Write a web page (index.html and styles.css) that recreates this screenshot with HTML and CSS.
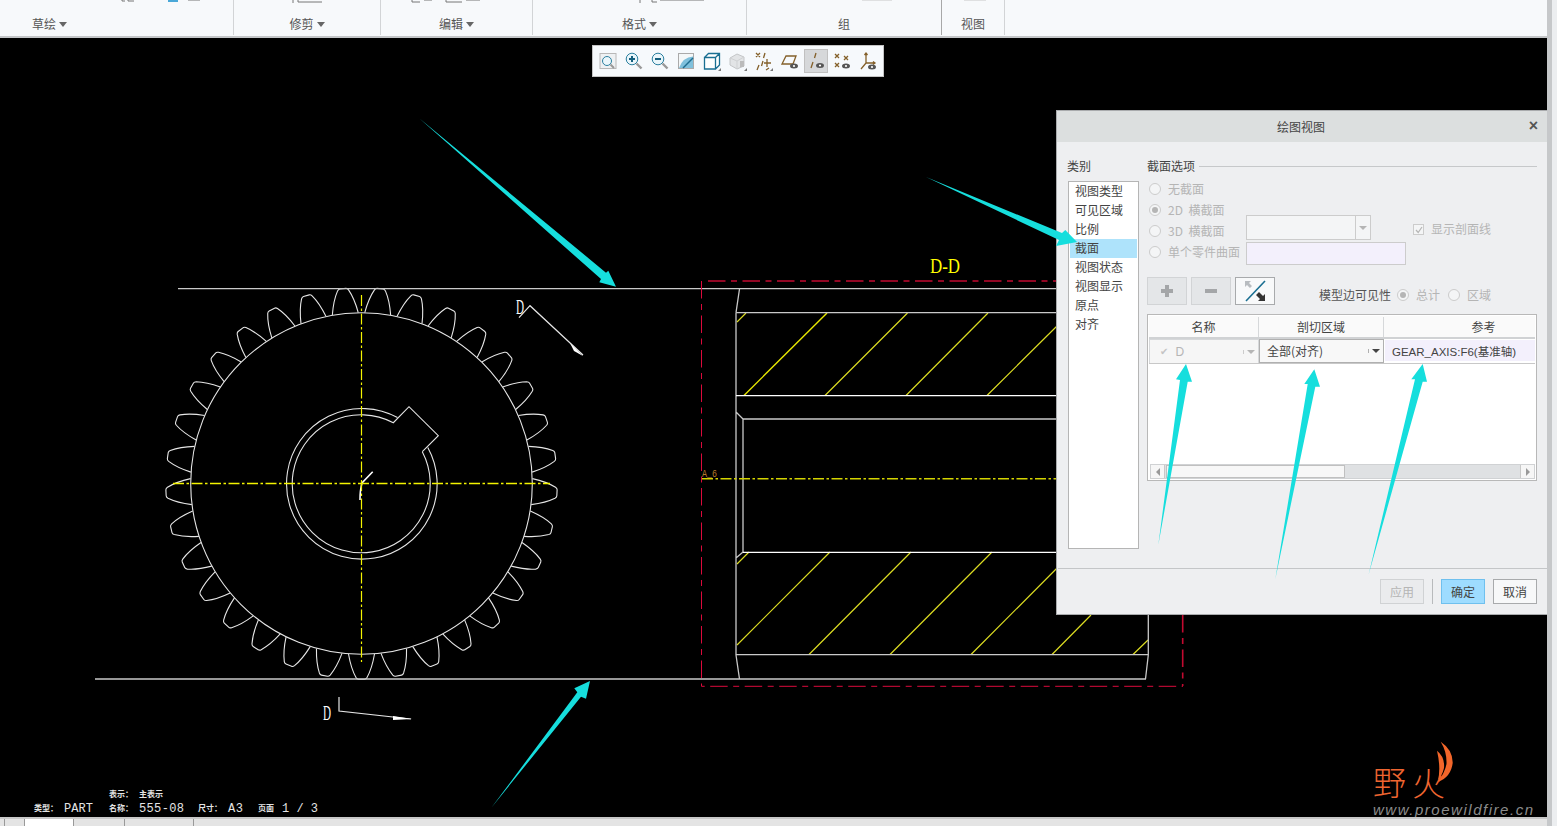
FILE: index.html
```html
<!DOCTYPE html>
<html lang="zh">
<head>
<meta charset="utf-8">
<title>绘图视图</title>
<link rel="stylesheet" href="styles.css">
</head>
<body>
<div class="app">
  <div class="main">
    <header class="ribbon">
      <div class="group g1"><span class="glab">草绘</span><i class="caret"></i></div>
      <div class="group g2"><span class="glab">修剪</span><i class="caret"></i></div>
      <div class="group g3"><span class="glab">编辑</span><i class="caret"></i></div>
      <div class="group g4"><span class="glab">格式</span><i class="caret"></i></div>
      <div class="group g5"><span class="glab">组</span></div>
      <div class="group g6"><span class="glab">视图</span></div>
      <svg class="clipped" width="1010" height="5" viewBox="0 0 1010 5">
        <path d="M122 0v1h3M128 0v1h6M188 0h12M293 0v3M298 0v2h24M412 0v2h8M424 0h8M446 0v2h16M466 0h14M640 0v3M652 0v2h5M660 0h44" stroke="#777" fill="none"/>
        <rect x="168" y="0" width="10" height="2" fill="#4aa8d8"/>
        <path d="M862 0h30M964 0h22" stroke="#c8c8c8" fill="none"/>
      </svg>
    </header>
    <div class="canvas">
      <svg class="drawing" width="1547" height="779" viewBox="0 38 1547 779">
        <defs>
          <path id="tooth" d="M-13 170.5Q-10.5 185-5.5 194Q-4.5 195.7-3 195.7L3 195.7Q4.5 195.7 5.5 194Q10.5 185 13 170.5"/>
        </defs>
        <!-- gear -->
        <g class="gear">
          <circle cx="361.5" cy="483.5" r="170.8"/>
          <g transform="translate(361.5 483.5)">
            <use href="#tooth"/><use href="#tooth" transform="rotate(10.909)"/><use href="#tooth" transform="rotate(21.818)"/>
            <use href="#tooth" transform="rotate(32.727)"/><use href="#tooth" transform="rotate(43.636)"/><use href="#tooth" transform="rotate(54.545)"/>
            <use href="#tooth" transform="rotate(65.455)"/><use href="#tooth" transform="rotate(76.364)"/><use href="#tooth" transform="rotate(87.273)"/>
            <use href="#tooth" transform="rotate(98.182)"/><use href="#tooth" transform="rotate(109.091)"/><use href="#tooth" transform="rotate(120)"/>
            <use href="#tooth" transform="rotate(130.909)"/><use href="#tooth" transform="rotate(141.818)"/><use href="#tooth" transform="rotate(152.727)"/>
            <use href="#tooth" transform="rotate(163.636)"/><use href="#tooth" transform="rotate(174.545)"/><use href="#tooth" transform="rotate(185.455)"/>
            <use href="#tooth" transform="rotate(196.364)"/><use href="#tooth" transform="rotate(207.273)"/><use href="#tooth" transform="rotate(218.182)"/>
            <use href="#tooth" transform="rotate(229.091)"/><use href="#tooth" transform="rotate(240)"/><use href="#tooth" transform="rotate(250.909)"/>
            <use href="#tooth" transform="rotate(261.818)"/><use href="#tooth" transform="rotate(272.727)"/><use href="#tooth" transform="rotate(283.636)"/>
            <use href="#tooth" transform="rotate(294.545)"/><use href="#tooth" transform="rotate(305.455)"/><use href="#tooth" transform="rotate(316.364)"/>
            <use href="#tooth" transform="rotate(327.273)"/><use href="#tooth" transform="rotate(338.182)"/><use href="#tooth" transform="rotate(349.091)"/>
          </g>
          <path d="M397.5 417.5A75.3 75.3 0 1 0 427.8 447.5"/>
          <path d="M422.3 451.7A69 69 0 1 1 393.3 422.7L409 406.7L438.3 435.7L422.3 451.7"/>
          <path class="cursor" d="M372.7 471.7L362 483Q360 490 360 500"/>
        </g>
        <path class="axis wide" d="M173 483.5H550"/>
        <path class="axis" d="M361.5 295V662"/>
        <!-- baselines -->
        <path class="line" d="M178 288.7H1057M95 679H1146"/>
        <!-- section view -->
        <path class="hatch" d="M827 313L744 395.5"/>
        <path class="hatch thin" d="M746 313L737 322M907.5 313L825 395.5M988 313L906 395.5M1057 326L987 395.5M749 552L737 564M830 552L737 645M911 552L809 654.5M992 552L890 654.5M1073 552L971 654.5M1091 615L1052 654.5M1148 640L1133 654.5"/>
        <path class="line" d="M736 312.7H1057M736 312.7V655M743 419H1057M743 419V552M736 412L743 419M736 558L743 552M736 654.7H1148M1148.3 610V655M739.5 289L736 312.7M736 655L739.5 679M1148.3 655L1145.5 679"/>
        <path class="bright" d="M736 395.7H1057M743 552.3H1057"/>
        <path class="redTop" d="M708 281H1057"/>
        <path class="redThin" d="M701.5 281V686.3H1183"/>
        <path class="redTop" d="M1182.7 615V686"/>
        <path class="axis2" d="M702 478.7H1057"/>
        <text class="dd" x="930" y="273" textLength="30" lengthAdjust="spacingAndGlyphs">D-D</text>
        <text class="a6" x="702" y="477" textLength="15" lengthAdjust="spacingAndGlyphs">A_6</text>
        <!-- section marks -->
        <text class="mark" x="516" y="314" textLength="8" lengthAdjust="spacingAndGlyphs">D</text>
        <path class="mark-l" d="M519 317.7L530 305.7L583 355"/>
        <path class="mark-a" d="M570 343L583 356L574 351Z"/>
        <text class="mark" x="323" y="720" textLength="8" lengthAdjust="spacingAndGlyphs">D</text>
        <path class="mark-l" d="M339 697V711L411 719"/>
        <path class="mark-a" d="M393 716L412 719L393 720Z"/>
        <!-- title block -->
        <text class="tb tbs" x="109" y="797">表示：</text><text class="tb tbs" x="139" y="797">主表示</text>
        <text class="tb tbs" x="34" y="811">类型：</text><text class="tb" x="64" y="812" textLength="29" lengthAdjust="spacing">PART</text>
        <text class="tb tbs" x="109" y="811">名称：</text><text class="tb" x="139" y="812" textLength="45" lengthAdjust="spacing">555-08</text>
        <text class="tb tbs" x="198" y="811">尺寸：</text><text class="tb" x="228" y="812" textLength="15" lengthAdjust="spacing">A3</text>
        <text class="tb tbs" x="258" y="811">页面</text><text class="tb" x="282" y="812" textLength="36" lengthAdjust="spacing">1 / 3</text>
        <!-- logo -->
        <text class="logo" x="1373" y="795">野</text>
        <text class="logo" x="1412" y="796">火</text>
        <path class="flame" d="M1440.7 741.7Q1453 750 1452.7 763Q1451 777 1438 782Q1445 772 1446.5 764Q1447 752 1440.7 741.7Z"/>
        <path class="flame" d="M1437 750.7Q1445 757 1444 768Q1442 776 1438 780Q1441 768 1437 750.7Z"/>
        <text class="www" x="1373" y="815" textLength="160" lengthAdjust="spacing">www.proewildfire.cn</text>
      </svg>

      <nav class="viewbar">
        <span class="vb"><svg width="20" height="20" viewBox="0 0 20 20"><rect x="2" y="2.5" width="16" height="15" fill="#eef1f3" stroke="#b8b8b8"/><circle cx="9" cy="10" r="4.5" fill="#eaf6fb" stroke="#2a7f9f"/><path d="M12.5 13.5L16 17" stroke="#999" stroke-width="2"/></svg></span>
        <span class="vb"><svg width="20" height="20" viewBox="0 0 20 20"><circle cx="8" cy="8" r="5.8" fill="#eaf6fb" stroke="#2a7f9f"/><path d="M8 5V11M5 8H11" stroke="#15607f" stroke-width="2"/><path d="M12.5 12.5L17.5 17.5" stroke="#999" stroke-width="2.4"/></svg></span>
        <span class="vb"><svg width="20" height="20" viewBox="0 0 20 20"><circle cx="8" cy="8" r="5.8" fill="#eaf6fb" stroke="#2a7f9f"/><path d="M5 8H11" stroke="#15607f" stroke-width="2"/><path d="M12.5 12.5L17.5 17.5" stroke="#999" stroke-width="2.4"/></svg></span>
        <span class="vb"><svg width="20" height="20" viewBox="0 0 20 20"><rect x="2.5" y="2.5" width="15" height="15" fill="#7fc0dc" stroke="#aaa"/><path d="M3 3H17V5.5Q7 6 3 17Z" fill="#f4f7f8"/><path d="M7 17L17 7" stroke="#1f6d8f" stroke-width="1.4"/></svg></span>
        <span class="vb"><svg width="20" height="20" viewBox="0 0 20 20"><path d="M2.5 6.5H13.5V18H2.5ZM2.5 6.5L6.5 2.5H17.5V14L13.5 18M13.5 6.5L17.5 2.5" fill="#fff" stroke="#1a6f92" stroke-width="1.3"/><path d="M19 17V20H16Z" fill="#777"/></svg></span>
        <span class="vb"><svg width="20" height="20" viewBox="0 0 20 20"><path d="M2 7L9 3L16 6V15L9 18L2 14Z" fill="#e2e4e6" stroke="#c4c6c8"/><path d="M2 7L9 10L16 6M9 10V18" stroke="#cfd1d3" fill="none"/><rect x="12" y="10" width="4" height="6" fill="#bbb"/><path d="M19 17V20H16Z" fill="#777"/></svg></span>
        <span class="vb"><svg width="20" height="20" viewBox="0 0 20 20"><path class="dt" d="M2 2L6 6M6 2L2 6M11 2L9.5 7M9 10L7.5 15M5 14L3 19M13 8V16M10 12H17M15 17L12 19"/><path d="M19 17V20H16Z" fill="#777"/></svg></span>
        <span class="vb"><svg width="20" height="20" viewBox="0 0 20 20"><path class="dt" d="M6 5H16L13 13H2Z"/><ellipse cx="14" cy="15" rx="4" ry="2.5" fill="#555"/><circle cx="14" cy="15" r="1.1" fill="#fff"/></svg></span>
        <span class="vb on"><svg width="20" height="20" viewBox="0 0 20 20"><path class="dt" d="M10 2L8.5 7M7 11L5 17"/><ellipse cx="14" cy="14.5" rx="4" ry="2.5" fill="#555"/><circle cx="14" cy="14.5" r="1.1" fill="#fff"/></svg></span>
        <span class="vb"><svg width="20" height="20" viewBox="0 0 20 20"><path class="dt" d="M3 3L7 7M7 3L3 7M12 5L16 9M16 5L12 9M3 12L7 16M7 12L3 16"/><ellipse cx="14" cy="15" rx="4" ry="2.5" fill="#555"/><circle cx="14" cy="15" r="1.1" fill="#fff"/></svg></span>
        <span class="vb"><svg width="20" height="20" viewBox="0 0 20 20"><path class="dt" d="M8 2V12H17M8 12L3 18M6.5 4L8 2L9.5 4M15 10.5L17 12L15 13.5"/><ellipse cx="14" cy="16" rx="4" ry="2.5" fill="#555"/><circle cx="14" cy="16" r="1.1" fill="#fff"/></svg></span>
      </nav>

      <section class="dialog">
        <div class="dtitle"><span>绘图视图</span><b class="close">×</b></div>
        <div class="dbody">
          <aside class="cat">
            <div class="catlab">类别</div>
            <ul class="catlist">
              <li>视图类型</li><li>可见区域</li><li>比例</li><li class="sel">截面</li>
              <li>视图状态</li><li>视图显示</li><li>原点</li><li>对齐</li>
            </ul>
          </aside>
          <div class="opts">
            <div class="legend"><span>截面选项</span><i></i></div>
            <div class="secgrid">
              <div class="radios">
                <label class="rad"><i class="rb"></i>无截面</label>
                <label class="rad"><i class="rb chk"></i>2D 横截面</label>
                <label class="rad"><i class="rb"></i>3D 横截面</label>
                <label class="rad"><i class="rb"></i>单个零件曲面</label>
              </div>
              <div class="fields">
                <div class="combo"><span class="cbody"></span><span class="cdrop"><i class="tri"></i></span></div>
                <div class="tint"></div>
              </div>
              <label class="hatchchk"><i class="cb"><svg width="10" height="10" viewBox="0 0 10 10"><path d="M2 5L4.2 7.5L8 2" fill="none" stroke="#b5b5b5" stroke-width="1.2"/></svg></i>显示剖面线</label>
            </div>
            <div class="tools">
              <button class="tbtn dis"><svg width="16" height="16" viewBox="0 0 16 16"><path d="M8 2V14M2 8H14" stroke="#a4a6a8" stroke-width="4"/></svg></button>
              <button class="tbtn dis"><svg width="16" height="16" viewBox="0 0 16 16"><path d="M2 8H14" stroke="#a4a6a8" stroke-width="4"/></svg></button>
              <button class="tbtn act"><svg width="24" height="24" viewBox="0 0 24 24"><path d="M3 22L22 2" stroke="#1a6f92" stroke-width="1.6"/><path d="M2 2H8L6 4L9 7L7 9L4 6L2 8Z" fill="#b8bcc0"/><path d="M22 22H15L17 20L13 16L16 13L20 17L22 15Z" fill="#333"/></svg></button>
              <div class="vis">
                <span class="vislab">模型边可见性</span>
                <label class="rad2"><i class="rb chk"></i>总计</label>
                <label class="rad2"><i class="rb"></i>区域</label>
              </div>
            </div>
            <div class="table">
              <div class="thead"><div class="th c1">名称</div><div class="th c2">剖切区域</div><div class="th c3 far">参考</div></div>
              <div class="trow">
                <div class="td c1 off"><span class="tick">✔</span><span class="tname">D</span><span class="cdrop"><i class="tri"></i></span></div>
                <div class="td c2 on2"><span class="tname2">全部(对齐)</span><span class="cdrop dark"><i class="tri"></i></span></div>
                <div class="td c3 ref">GEAR_AXIS:F6(基准轴)</div>
              </div>
              <div class="tempty"></div>
              <div class="hscroll">
                <span class="sbtn"><i class="tl"></i></span>
                <span class="thumb"></span>
                <span class="track"></span>
                <span class="sbtn"><i class="tr"></i></span>
              </div>
            </div>
          </div>
        </div>
        <footer class="dfoot">
          <button class="fbtn ghost">应用</button>
          <i class="fdiv"></i>
          <button class="fbtn primary">确定</button>
          <button class="fbtn">取消</button>
        </footer>
      </section>
    </div>
    <div class="status">
      <span class="st s1"></span><span class="st s2"></span><span class="st s3"></span><span class="st s4"></span><span class="st s5"></span><span class="st s6"></span>
    </div>
  </div>
  <div class="edge"></div>
</div>

<svg class="overlay" width="1557" height="826" viewBox="0 0 1557 826">
  <polygon class="arw" points="419.5,118.5 606,272.7 608.3,270.7 616,286.7 599.3,282.3 601,279"/>
  <polygon class="arw" points="926,177 1062,233 1065.3,230 1077,242 1056,246 1059,240"/>
  <polygon class="arw" points="1158.3,545 1180,380 1176,379.3 1186,364 1192,381.7 1187.7,381.7"/>
  <polygon class="arw" points="1275.3,579.3 1307.7,384 1304.3,384 1314.3,369.3 1320,386.7 1315.3,386.7"/>
  <polygon class="arw" points="1368.7,574.3 1415,379.3 1411.3,379.3 1422.7,364 1427,381.7 1422.7,381.7"/>
  <polygon class="arw" points="491.7,807.3 577.3,692.3 574.3,688.3 590,681 586,698.7 581,696.7"/>
</svg>
</body>
</html>
```
FILE: styles.css
```css
* { box-sizing: border-box; }
html, body { margin: 0; padding: 0; height: 100%; overflow: hidden; background: #000; }
body { font: 12px/1 "Noto Sans CJK SC", "Liberation Sans", sans-serif; color: #444; }
i { display: block; font-style: normal; }

.app { display: flex; width: 1557px; height: 826px; position: relative; }
.main { width: 1547px; display: flex; flex-direction: column; }
.edge { width: 10px; background: linear-gradient(90deg, #c6c8ca 0 5px, #eceef0 5px); }

/* ribbon */
.ribbon { height: 38px; flex: none; display: flex; background: #f7f9fb; border-bottom: 2px solid #c4c6c8; position: relative; }
.group { display: flex; align-items: center; justify-content: center; gap: 3px; padding-top: 13px; height: 35px; border-right: 1px solid #d2d4d6; color: #555; }
.g1 { width: 234px; padding-right: 134px; }
.g2 { width: 147px; }
.g3 { width: 152px; }
.g4 { width: 214px; }
.g5 { width: 195px; border-right-color: #a8a8a8; }
.g6 { width: 63px; }
.glab { font-size: 12px; }
.caret { width: 0; height: 0; border: 4px solid transparent; border-top: 5px solid #666; border-bottom: 0; }
.clipped { position: absolute; left: 0; top: 0; }

/* canvas */
.canvas { flex: 1; position: relative; background: #000; overflow: hidden; }
.drawing { display: block; }
.gear, .gear use { fill: none; stroke: #e6e6e6; stroke-width: 1.1; }
.cursor { stroke: #fff; stroke-width: 1.6; }
.axis { fill: none; stroke: #f4f400; stroke-width: 1.2; stroke-dasharray: 11 2.5 2.5 2.5; }
.axis.wide { stroke-width: 1.7; }
.axis2 { fill: none; stroke: #d4d400; stroke-width: 1.4; stroke-dasharray: 11 2.5 2.5 2.5; }
.line { fill: none; stroke: #c9c9c9; stroke-width: 1.3; }
.bright { fill: none; stroke: #fff; stroke-width: 1.3; }
.hatch { fill: none; stroke: #e8e800; stroke-width: 1.4; }
.hatch.thin { stroke: #dcdc22; stroke-width: 1.2; }
.redTop { fill: none; stroke: #c20a30; stroke-width: 1.6; stroke-dasharray: 17.5 5.5 6 5.5; }
.redThin { fill: none; stroke: #dc0a3c; stroke-width: 1; stroke-dasharray: 17.5 5.5 6 5.5; }
.dd { fill: #ffff00; font: 21px "Liberation Serif", serif; }
.a6 { fill: #b87a2a; font: 10px "Liberation Mono", monospace; }
.mark { fill: #fff; font: 20px "Liberation Serif", serif; }
.mark-l { fill: none; stroke: #e6e6e6; stroke-width: 1.2; }
.mark-a { fill: #fff; }
.tb { fill: #e4e4e4; font: 12px "Liberation Mono", monospace; }
.tbs { font: 700 8px "Noto Sans CJK SC", sans-serif; }
.logo { fill: #ee6530; font: 300 33px "Noto Sans CJK SC", sans-serif; }
.flame { fill: #f2662a; }
.www { fill: #8c8c8c; font: italic 15px "Liberation Sans", sans-serif; }

/* view toolbar */
.viewbar { position: absolute; left: 592px; top: 7px; width: 292px; height: 32px; display: flex; align-items: center; gap: 2px; padding-left: 3px; background: #f6f9fc; border: 1px solid #c4c4c4; }
.vb { width: 24px; height: 24px; flex: none; display: flex; align-items: center; justify-content: center; }
.vb.on { background: #d6d8da; border: 1px solid #c0c0c0; }
.dt { fill: none; stroke: #84602a; stroke-width: 1.3; }

/* dialog */
.dialog { position: absolute; left: 1056px; top: 72px; width: 491px; height: 505px; background: #eeeff1; border: 1px solid #a9abad; border-right: 0; display: flex; flex-direction: column; color: #444; }
.dtitle { height: 31px; flex: none; background: #dcdfdf; display: flex; align-items: center; justify-content: center; position: relative; padding-right: 2px; color: #444; }
.close { position: absolute; right: 9px; top: 7px; font: 700 16px/16px "Liberation Sans", sans-serif; color: #555; }
.dbody { flex: 1; display: flex; padding: 18px 10px 0 11px; gap: 8px; }
.cat { width: 71px; flex: none; }
.catlab { height: 21px; line-height: 12px; margin-left: -1px; }
.catlist { list-style: none; margin: 0; padding: 0 1px; height: 368px; width: 71px; background: #fff; border: 1px solid #b5b5b5; }
.catlist li { height: 19px; line-height: 18px; padding-left: 5px; white-space: nowrap; }
.catlist .sel { background: #aee3fb; }

.opts { width: 390px; flex: none; }
.legend { display: flex; align-items: center; gap: 4px; height: 12px; }
.legend i { flex: 1; height: 1px; background: #c6c8ca; }
.secgrid { position: relative; display: flex; height: 105px; padding-top: 6px; color: #b5b5b5; }
.radios { width: 99px; flex: none; display: flex; flex-direction: column; }
.rad { height: 21px; display: flex; align-items: center; gap: 7px; padding-left: 2px; white-space: nowrap; word-spacing: 3px; }
.rb { width: 12px; height: 12px; flex: none; border: 1px solid #ccc; border-radius: 50%; background: #f4f5f6; position: relative; }
.rb.chk::after { content: ""; position: absolute; left: 2px; top: 2px; width: 6px; height: 6px; border-radius: 50%; background: #b5b5b5; }
.fields { display: flex; flex-direction: column; gap: 2px; padding-top: 37px; }
.combo { width: 125px; height: 25px; display: flex; border: 1px solid #ccc; background: #f4f5f6; }
.cbody { flex: 1; }
.cdrop { width: 15px; flex: none; display: flex; align-items: center; justify-content: center; border-left: 1px solid #ccc; }
.tri { width: 0; height: 0; border: 4px solid transparent; border-top: 4px solid #b5b5b5; border-bottom: 0; }
.tint { width: 160px; height: 23px; background: #f3f0fc; border: 1px solid #ccc; }
.hatchchk { position: absolute; left: 266px; top: 51px; display: flex; align-items: center; gap: 7px; white-space: nowrap; }
.cb { width: 11px; height: 11px; border: 1px solid #ccc; background: #f4f5f6; }
.cb svg { display: block; }

.tools { display: flex; gap: 4px; height: 28px; }
.tbtn { width: 40px; height: 28px; padding: 0; display: flex; align-items: center; justify-content: center; background: #e4e6e8; border: 1px solid #d2d4d6; }
.tbtn.act { background: #f8f9fa; border: 1px solid #a8aaac; }
.vis { display: flex; align-items: center; margin-left: 40px; padding-top: 8px; white-space: nowrap; color: #555; }
.vislab { width: 78px; }
.rad2 { display: flex; align-items: center; gap: 7px; color: #b5b5b5; width: 51px; }

.table { margin-top: 9px; height: 167px; background: #fff; border: 1px solid #b8b8b8; padding: 1px; display: flex; flex-direction: column; }
.thead { display: flex; height: 23px; background: #fafafa; border-bottom: 2px solid #d0d2d4; flex: none; padding-top: 1px; }
.th { display: flex; align-items: center; justify-content: center; border-right: 1px solid #d6d8da; color: #444; }
.c1 { width: 110px; }
.c2 { width: 125px; }
.c3 { flex: 1; border-right: 0; }
.th.far { padding-left: 48px; }
.trow { display: flex; height: 25px; flex: none; border-bottom: 1px solid #c8c8c8; }
.td { display: flex; align-items: center; }
.td.off { background: #f6f6f6; border: 1px solid #d6d8da; border-width: 1px 1px 0 1px; color: #b5b5b5; padding-left: 10px; }
.tick { font: 10px "DejaVu Sans", sans-serif; color: #c4c4c4; }
.tname { flex: 1; padding-left: 7px; font: 12px "Liberation Sans", sans-serif; }
.td.on2 { background: #f8f8f8; border: 1px solid #b0b0b0; padding-left: 7px; }
.tname2 { flex: 1; white-space: nowrap; }
.cdrop.dark { border-left-color: #b0b0b0; }
.cdrop.dark .tri { border-top-color: #444; }
.td.ref { background: #f3f0fc; padding-left: 7px; margin: 1px 0 2px 1px; white-space: nowrap; font: 11.5px "Liberation Sans", "Noto Sans CJK SC", sans-serif; }
.tempty { flex: 1; }
.hscroll { display: flex; height: 15px; flex: none; margin: 0 0 0 1px; background: #dfe1e3; border: 1px solid #d0d2d4; }
.sbtn { width: 14px; flex: none; background: #f6f6f6; display: flex; align-items: center; justify-content: center; border-right: 1px solid #c8c8c8; }
.sbtn:last-child { border-right: 0; border-left: 1px solid #c8c8c8; }
.thumb { width: 179px; flex: none; background: #f7f7f7; border: 1px solid #c0c0c0; margin-left: 1px; }
.track { flex: 1; }
.tl { border: 4px solid transparent; border-right: 4px solid #999; border-left: 0; }
.tr { border: 4px solid transparent; border-left: 4px solid #999; border-right: 0; }

.dfoot { height: 46px; flex: none; border-top: 1px solid #c4c6c8; margin-left: 1px; display: flex; align-items: flex-start; justify-content: flex-end; gap: 8px; padding: 10px 10px 0 0; }
.fbtn { width: 44px; height: 25px; padding: 0; font: 12px "Noto Sans CJK SC", sans-serif; color: #444; background: #f7f8f9; border: 1px solid #a8aaac; }
.fbtn.ghost { color: #b5b5b5; background: #eaebed; border-color: #d0d2d4; }
.fbtn.primary { background: #9edcff; border-color: #6fc0ee; }
.fdiv { width: 1px; height: 25px; background: #b8babc; }

/* bottom strip */
.status { height: 9px; flex: none; display: flex; background: #e4e4e4; border-top: 2px solid #c8c8c8; }
.st { display: block; height: 100%; border-left: 1px solid #999; }
.s1 { width: 4px; border-left: 0; background: #e4e4e4; }
.s2 { width: 20px; }
.s3 { width: 49px; background: #fff; }
.s4 { width: 51px; }
.s5 { width: 69px; }
.s6 { flex: 1; }

.overlay { position: absolute; left: 0; top: 0; pointer-events: none; }
.arw { fill: #16dedd; }
```
